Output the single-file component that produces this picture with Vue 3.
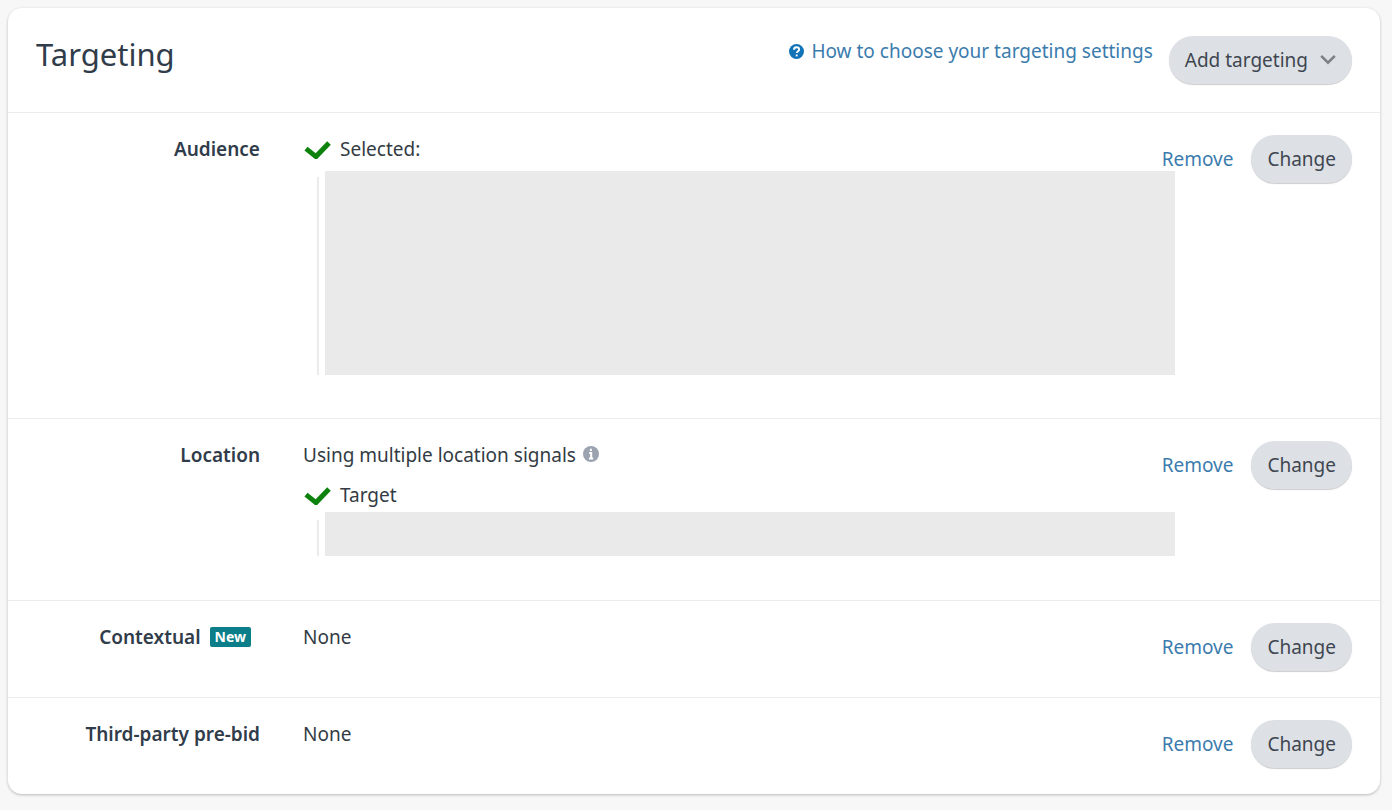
<template>
  <section class="card">

    <header class="card-header">
      <h1>Targeting</h1>

      <div class="header-actions">
        <a class="help-link" href="#">
          <svg class="help-icon" viewBox="0 0 16 16" aria-hidden="true">
            <circle cx="8" cy="8" r="8" />
            <path d="M5.3 6.2C5.3 4.4 6.4 3.5 8 3.5S10.8 4.5 10.8 6C10.8 7.7 8.3 7.7 8.3 9.7" />
            <path d="M8.2 11.2V13.2" />
          </svg>
          <span>How to choose your targeting settings</span>
        </a>

        <button type="button" class="pill add-button">
          Add targeting
          <svg class="chevron" viewBox="0 0 16 12" aria-hidden="true">
            <path d="M1.2 1.8L8 8.6L14.8 1.8" />
          </svg>
        </button>
      </div>
    </header>

    <div
      v-for="row in rows"
      :key="row.label"
      class="row"
    >
      <h2 class="label">
        {{ row.label }}
        <span v-if="row.isNew" class="badge">New</span>
      </h2>

      <div class="content">
        <p v-if="row.text" class="summary">
          {{ row.text }}
          <svg v-if="row.info" class="info-icon" viewBox="0 0 16 16" aria-hidden="true">
            <circle cx="8" cy="8" r="8" />
            <path d="M7.9 2.8V5M6.2 7H8.2V12.2M6 12.4H10.2" />
          </svg>
        </p>

        <template v-if="row.status">
          <p class="status">
            <svg class="check" viewBox="0 0 28 20" aria-hidden="true">
              <path d="M3 9.6L13 17.6L26 4" />
            </svg>
            {{ row.status }}
          </p>
          <div class="details" :class="row.size">
            <div class="details-body"></div>
          </div>
        </template>
      </div>

      <div class="row-actions">
        <a href="#" @click.prevent="remove(row)">Remove</a>
        <button type="button" class="pill">Change</button>
      </div>
    </div>

  </section>
</template>


<script setup>
import { ref } from "vue";

const rows = ref([
  { label: "Audience", status: "Selected:", size: "large" },
  {
    label: "Location",
    text: "Using multiple location signals",
    info: true,
    status: "Target",
    size: "small"
  },
  { label: "Contextual", text: "None", isNew: true },
  { label: "Third-party pre-bid", text: "None" }
]);

function remove(row) {
  row.status = "";
  row.info = false;
  row.text = "None";
}
</script>

<style>
body {
  background: #f7f7f7;
}
</style>

<style scoped>
.card {
  margin: 8px 12px 16px 8px;
  background: white;
  border-radius: 14px;
  box-shadow: 0 1px 3px rgba(0, 0, 0, .25);
  color: #333b44;
  font-family: "Noto Sans", "Open Sans", sans-serif;
  font-size: 19px;
  line-height: 24px;
}

.card h1,
.card h2,
.card p {
  margin: 0;
}

.card a {
  color: #3b7cae;
  text-decoration: none;
}

.card a:hover {
  text-decoration: underline;
}

.card-header {
  display: flex;
  justify-content: space-between;
  align-items: flex-start;
  padding: 28px;
}

.card-header h1 {
  color: #303c4a;
  font-size: 31px;
  font-weight: 400;
  line-height: 36px;
}

.header-actions {
  display: flex;
  align-items: flex-start;
  gap: 16px;
}

.help-link {
  display: flex;
  align-items: center;
  gap: 7px;
  padding-top: 3px;
}

.help-icon {
  width: 15px;
  height: 15px;
}

.help-icon circle {
  fill: #1273b8;
}

.help-icon path {
  fill: none;
  stroke: white;
  stroke-width: 2;
}

.pill {
  height: 48px;
  padding: 0 16px;
  border: none;
  border-radius: 24px;
  background: #dde1e6;
  box-shadow: 0 1px 1px rgba(0, 0, 0, .2);
  color: #3f4650;
  font: inherit;
  cursor: pointer;
}

.pill:hover {
  background: #d0d5db;
}

.add-button {
  display: flex;
  align-items: center;
  gap: 12px;
}

.chevron {
  width: 16px;
  height: 12px;
}

.chevron path {
  fill: none;
  stroke: #7b8085;
  stroke-width: 2.6;
}

.row {
  display: grid;
  grid-template-columns: 224px minmax(0, 1fr) auto;
  padding: 22px 28px 26px;
  border-top: 1px solid #ececec;
}

.label {
  display: flex;
  justify-content: flex-end;
  align-items: center;
  align-self: start;
  gap: 9px;
  padding-top: 2px;
  color: #303c4a;
  font-size: 19px;
  font-weight: 600;
}

.badge {
  margin-right: 9px;
  padding: 0 5px;
  border-radius: 2px;
  background: #0b7e89;
  color: white;
  font-size: 14px;
  font-weight: 700;
  line-height: 20px;
}

.content {
  padding: 2px 0 0 43px;
}

.status {
  display: flex;
  align-items: center;
  gap: 9px;
}

.summary + .status {
  margin-top: 16px;
}

.check {
  width: 28px;
  height: 20px;
}

.check path {
  fill: none;
  stroke: #0d820d;
  stroke-width: 5;
}

.info-icon {
  width: 16px;
  height: 16px;
  margin-left: 2px;
}

.info-icon circle {
  fill: #9ba3b1;
}

.info-icon path {
  fill: none;
  stroke: white;
  stroke-width: 2;
}

/* the panel runs a little way under the actions column */
.details {
  display: flex;
  gap: 6px;
  margin: 10px -13px 17px 14px;
}

.details::before {
  content: "";
  width: 2px;
  margin-top: 6px;
  background: #ebebeb;
}

.details-body {
  flex: 1;
  background: #eaeaea;
}

.large .details-body {
  height: 204px;
}

.details.small {
  margin-top: 5px;
  margin-bottom: 18px;
}

.small::before {
  margin-top: 8px;
}

.small .details-body {
  height: 44px;
}

.row-actions {
  display: flex;
  align-items: center;
  align-self: start;
  gap: 18px;
}
</style>
